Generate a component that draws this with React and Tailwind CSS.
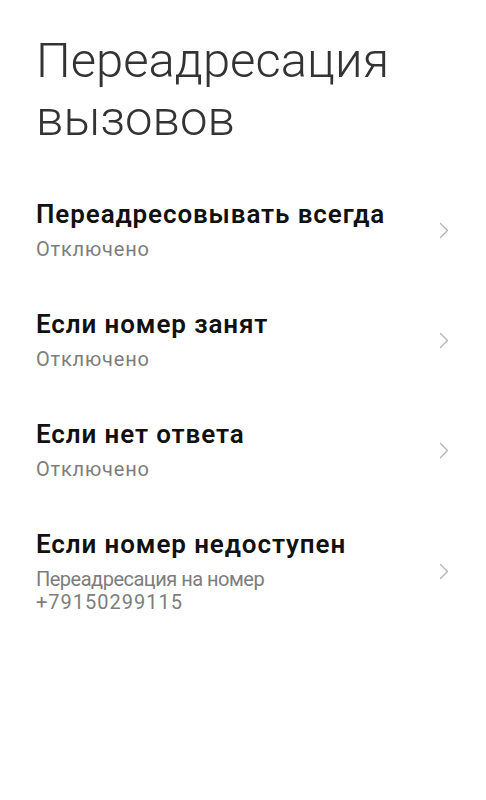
import React from 'react';

const items = [
  { title: "Переадресовывать всегда", sub: [{ t: "Отключено", c: "tracking-[0.8px]" }] },
  { title: "Если номер занят", sub: [{ t: "Отключено", c: "tracking-[0.8px]" }] },
  { title: "Если нет ответа", sub: [{ t: "Отключено", c: "tracking-[0.8px]" }] },
  {
    title: "Если номер недоступен",
    sub: [
      { t: "Переадресация на номер", c: "tracking-[-0.5px]" },
      { t: "+79150299115", c: "tracking-[1px]" },
    ],
  },
];

function Chevron() {
  return (
    <svg width="10" height="17" viewBox="0 0 10 17" fill="none" className="shrink-0">
      <path d="M1.5 1.5 L8.5 8.5 L1.5 15.5" stroke="#b5b5b5" strokeWidth="1.4" strokeLinecap="round" strokeLinejoin="round" />
    </svg>
  );
}

function Row({ title, sub }) {
  return (
    <div className="flex items-center justify-between pr-[37px]">
      <div className="flex flex-col">
        <div className="text-[26px] leading-[30px] font-semibold tracking-[0.9px] text-[#111]">{title}</div>
        <div className="mt-[9px] text-[20px] leading-[23px] text-[#7d7d7d]">
          {sub.map((s) => (
            <div key={s.t} className={s.c}>{s.t}</div>
          ))}
        </div>
      </div>
      <Chevron />
    </div>
  );
}

export default function App() {
  return (
    <div className="min-h-screen bg-white pl-[36px] pt-[32px]" style={{ fontFamily: 'Roboto, "Noto Sans", sans-serif' }}>
      <h1 className="text-[49px] leading-[58px] font-light text-[#333]">
        Переадресация
        <br />
        вызовов
      </h1>
      <div className="mt-[51px] flex flex-col gap-[48px]">
        {items.map((it) => (
          <Row key={it.title} {...it} />
        ))}
      </div>
    </div>
  );
}
